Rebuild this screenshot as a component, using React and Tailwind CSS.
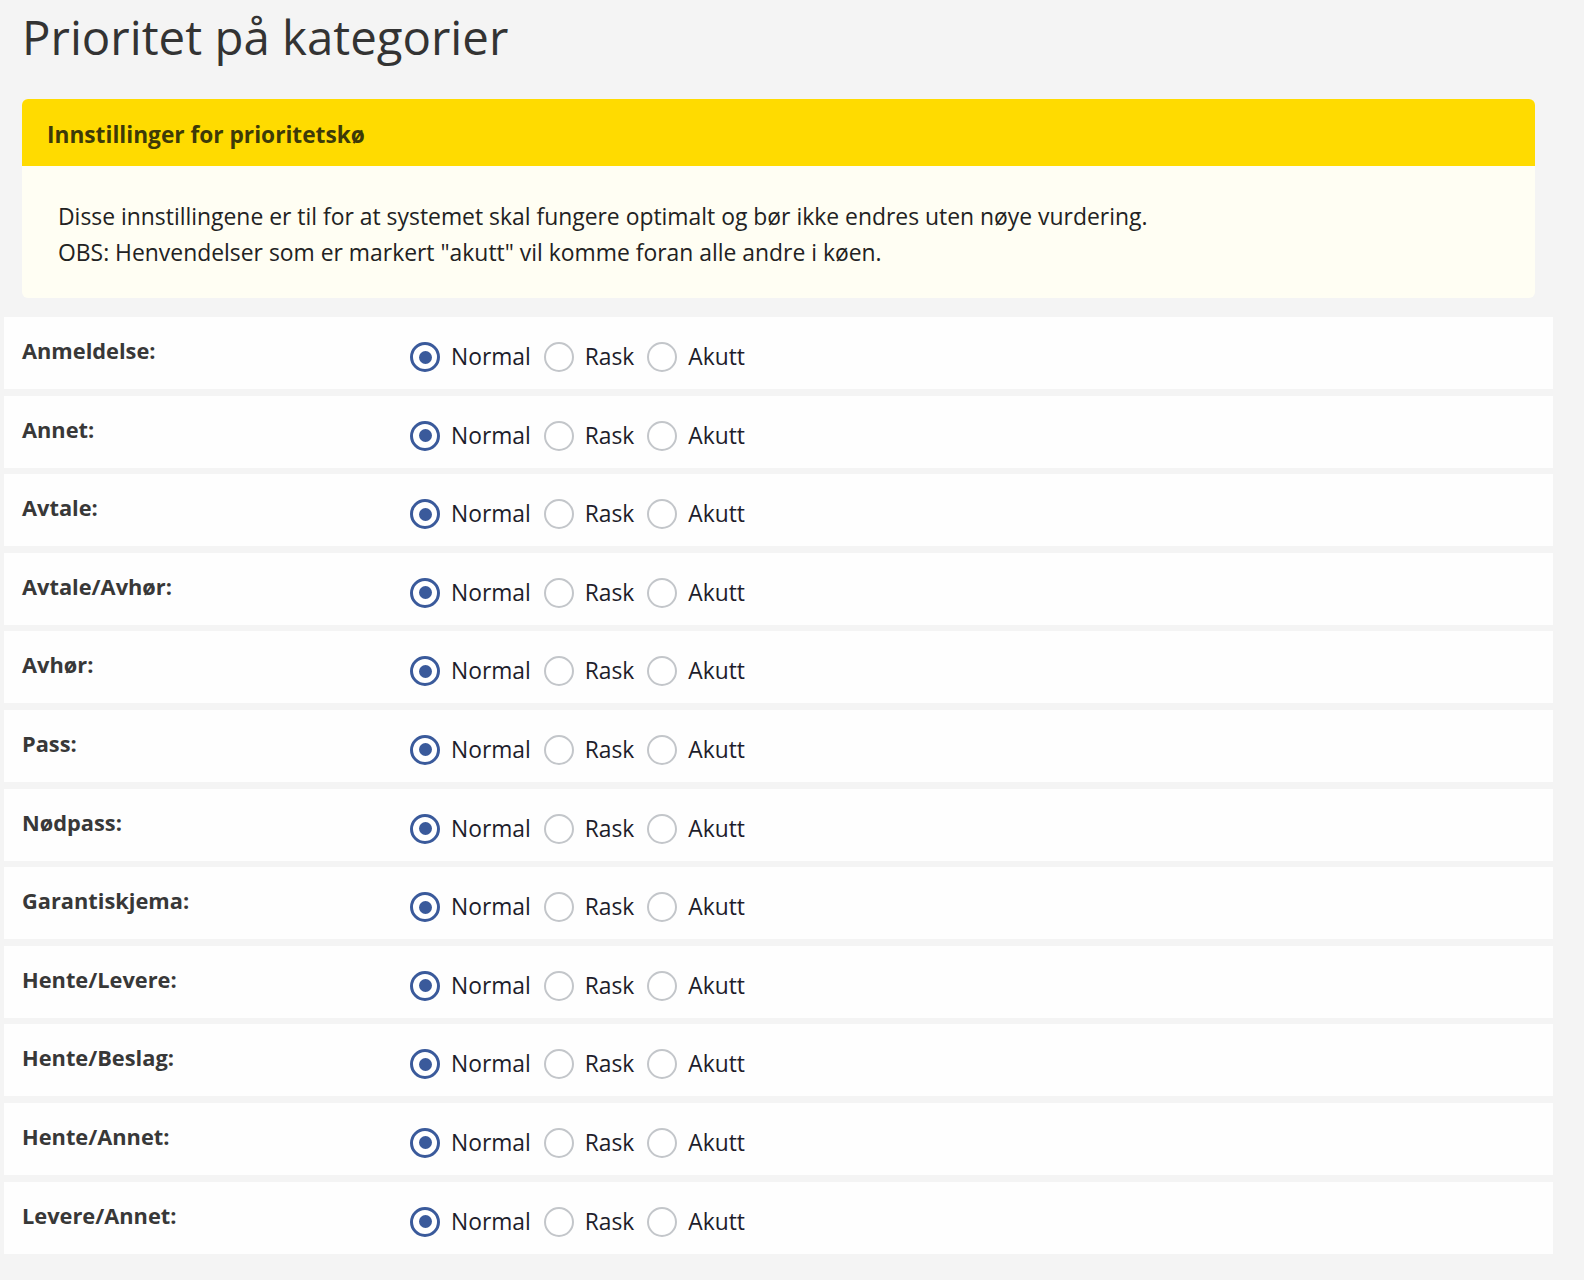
import React from 'react';

const categories = [
  'Anmeldelse:',
  'Annet:',
  'Avtale:',
  'Avtale/Avhør:',
  'Avhør:',
  'Pass:',
  'Nødpass:',
  'Garantiskjema:',
  'Hente/Levere:',
  'Hente/Beslag:',
  'Hente/Annet:',
  'Levere/Annet:',
];

const options = ['Normal', 'Rask', 'Akutt'];

function Radio({ checked }) {
  if (checked) {
    return (
      <span className="flex h-[30px] w-[30px] shrink-0 items-center justify-center rounded-full border-[3px] border-[#3a5a9b] bg-white">
        <span className="h-[13px] w-[13px] rounded-full bg-[#3a5a9b]" />
      </span>
    );
  }
  return <span className="h-[30px] w-[30px] shrink-0 rounded-full border-[2.5px] border-[#c3c6ca] bg-white" />;
}

function CategoryRow({ label }) {
  return (
    <div className="flex h-[72px] bg-[#fefefe] pl-[18px]">
      <div className="w-[388px] pt-[20px] text-[21.8px] font-bold leading-[28px] text-[#383838]">{label}</div>
      <div className="flex h-[30px] items-center mt-[25px]">
        {options.map((opt, i) => (
          <label key={opt} className="mr-[13px] flex cursor-pointer items-center">
            <Radio checked={i === 0} />
            <span className="ml-[11px] text-[22.8px] leading-[30px] text-[#1d1d2b]">{opt}</span>
          </label>
        ))}
      </div>
    </div>
  );
}

export default function App() {
  return (
    <div className="min-h-screen bg-[#f4f4f4] pb-[26px]" style={{ fontFamily: '"Open Sans", "Noto Sans", sans-serif' }}>
      <h1 className="pl-[22px] pt-[10px] text-[47.4px] font-normal leading-[54px] text-[#333333]">Prioritet på kategorier</h1>

      <div className="ml-[22px] mt-[35px] w-[1513px] overflow-hidden rounded-md bg-[#fffef3]">
        <div className="h-[67px] bg-[#ffdb00] px-[25px] pt-[22px] text-[22.7px] font-bold leading-[28px] text-[#3d3a08]">
          Innstillinger for prioritetskø
        </div>
        <div className="px-[36px] pt-[33px] pb-[27px] text-[22.9px] leading-[36px] text-[#222222]">
          <p>Disse innstillingene er til for at systemet skal fungere optimalt og bør ikke endres uten nøye vurdering.</p>
          <p>OBS: Henvendelser som er markert "akutt" vil komme foran alle andre i køen.</p>
        </div>
      </div>

      <div className="ml-[4px] mt-[19px] flex w-[1549px] flex-col gap-[6.6px]">
        {categories.map((c) => (
          <CategoryRow key={c} label={c} />
        ))}
      </div>
    </div>
  );
}
